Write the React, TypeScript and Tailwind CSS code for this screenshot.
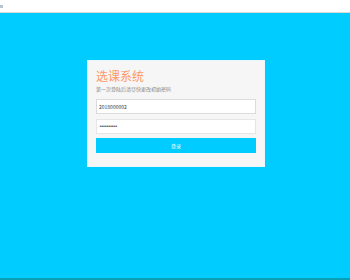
import React from "react";

export default function App() {
  return (
    <div className="flex h-[280px] w-[350px] flex-col overflow-hidden" style={{ fontFamily: '"Noto Sans CJK SC", "Noto Sans", sans-serif' }}>
      <div className="flex h-[13px] items-center border-b border-[#d9d9d9] bg-white">
        <div className="ml-0 h-[3px] w-[3px] bg-[#b8c4d0]" />
      </div>
      <div className="flex flex-1 flex-col bg-[#00ccff]">
        <div className="flex flex-1 items-start pl-[87px] pt-[47px]">
          <div className="flex w-[178px] flex-col border border-[#e9f6fb] bg-[#f6f6f6] px-[8px] pb-[13px] pt-[8px]">
            <div className="text-[12px] leading-[14px] tracking-[0px] text-[#ff9966]">选课系统</div>
            <div className="mt-[3px] text-[5px] leading-[6px] text-[#888]">第一次登陆后请尽快更改初始密码</div>
            <div className="mt-[7px] flex h-[15px] items-center border border-[#dcdcdc] bg-white px-[2px] text-[5px] text-[#333]">2018000002</div>
            <div className="mt-[5px] flex h-[15px] items-center border border-[#e6e6e6] bg-white px-[2px]">
              <span className="text-[5px] leading-[5px] tracking-[-1.2px] text-[#333]" style={{ fontFamily: '"DejaVu Sans", sans-serif' }}>••••••••••</span>
            </div>
            <div className="mt-[4px] flex h-[15px] items-center justify-center bg-[#00ccff] text-[5px] text-white">登录</div>
          </div>
        </div>
        <div className="h-[2px] bg-[#0aa0b4]" />
      </div>
    </div>
  );
}
